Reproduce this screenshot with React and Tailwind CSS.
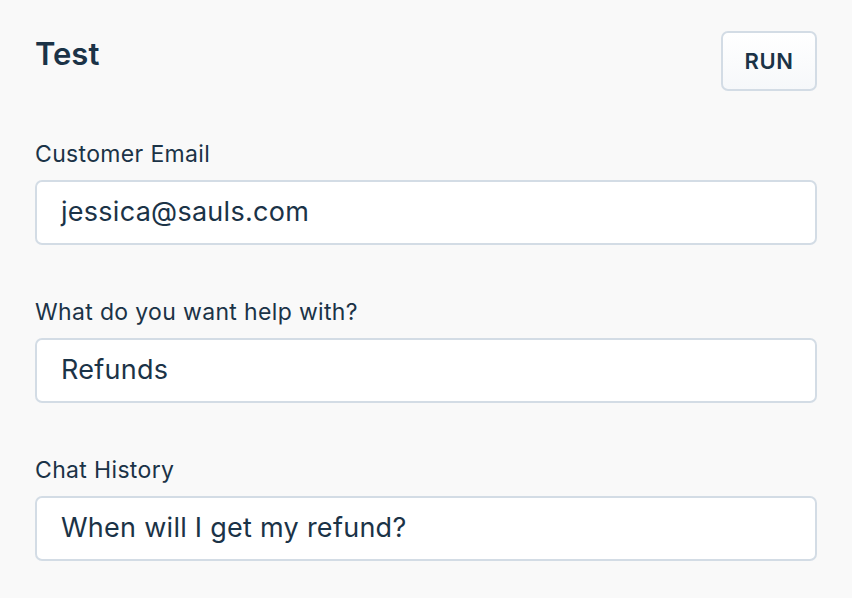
import React from "react";

const fields = [
  { label: "Customer Email", value: "jessica@sauls.com" },
  { label: "What do you want help with?", value: "Refunds" },
  { label: "Chat History", value: "When will I get my refund?" },
];

const App = () => {
  return (
    <div
      className="min-h-[598px] w-full bg-[#f9f9f9] text-[#1b3347] px-[35px] pt-[31px]"
      style={{ fontFamily: "Inter, 'Noto Sans', sans-serif" }}
    >
      <div className="flex items-start justify-between">
        <h1 className="text-[31px] font-semibold leading-none mt-[7px]">Test</h1>
        <button className="w-[96px] h-[60px] rounded-[7px] border-2 border-[#d3dce5] bg-gradient-to-b from-white to-[#f6f8fa] text-[22px] font-semibold tracking-wide">
          RUN
        </button>
      </div>

      {/* form fields */}
      <div className="mt-[48px] flex flex-col gap-[52px]">
        {fields.map((f) => (
          <div key={f.label} className="flex flex-col">
            <label className="text-[23px] tracking-[0.015em] leading-[30px] mb-[11px]">{f.label}</label>
            <div className="h-[65px] rounded-[7px] border-2 border-[#d3dce5] bg-white flex items-center px-[24px] text-[27px] tracking-[0.01em]">
              {f.value}
            </div>
          </div>
        ))}
      </div>
    </div>
  );
};

export default App;
